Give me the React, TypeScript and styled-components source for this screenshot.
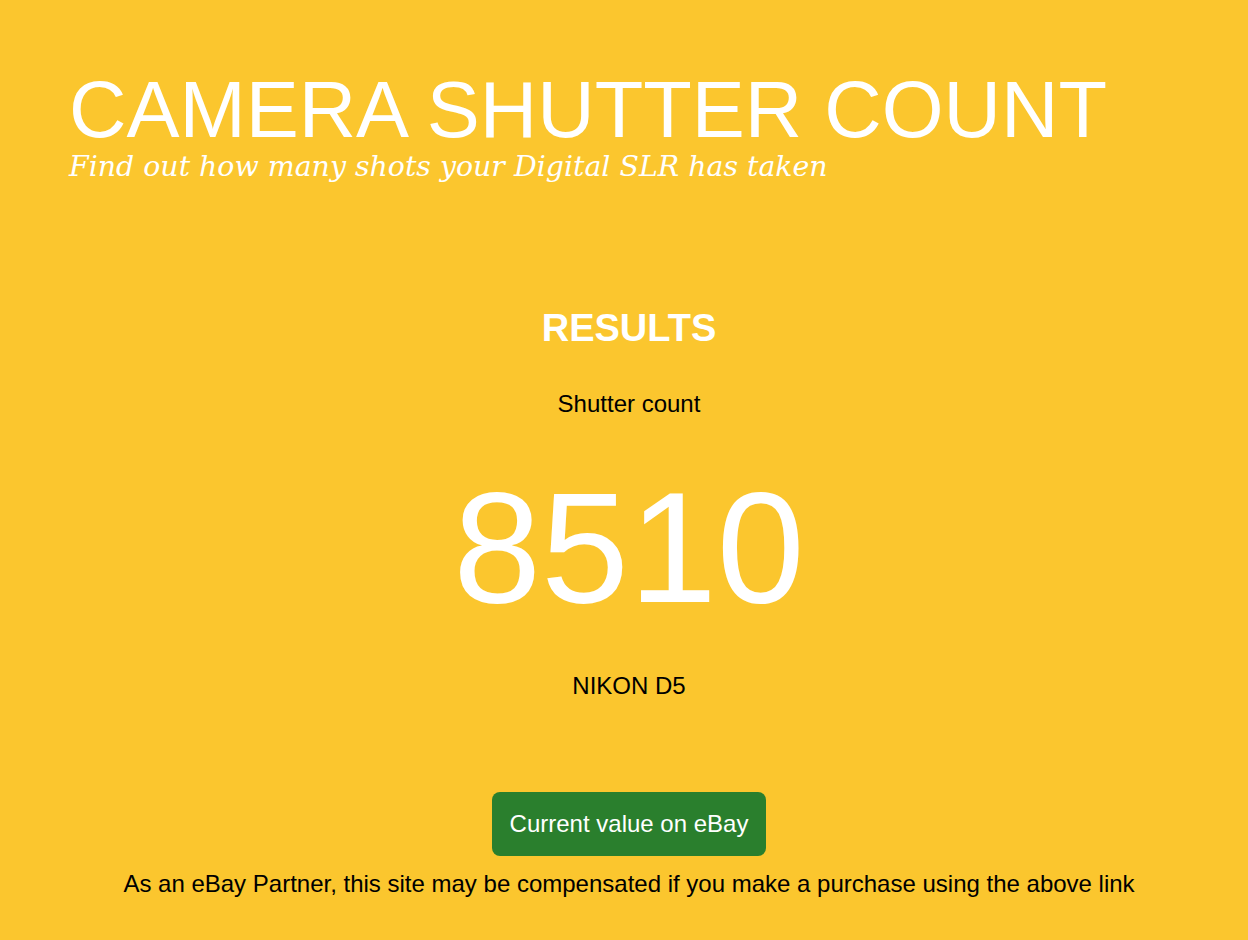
import React from "react";
import styled, { createGlobalStyle } from "styled-components";

const Global = createGlobalStyle`
  html, body { margin: 0; padding: 0; background: #fbc62e; }
  body { font-family: "Liberation Sans", Arial, sans-serif; }
`;

const Page = styled.div`
  min-height: 940px;
  background: #fbc62e;
  box-sizing: border-box;
  padding: 0 0 0 10px;
`;

const Header = styled.header`
  padding: 70px 0 0 59px;
`;

const Title = styled.h1`
  margin: 0;
  font-family: "Liberation Sans", Arial, sans-serif;
  font-weight: 400;
  font-size: 79.5px;
  line-height: 80px;
  color: #fff;
`;

const Subtitle = styled.p`
  margin: 0;
  font-family: "DejaVu Serif", Georgia, serif;
  font-style: italic;
  font-size: 28.4px;
  line-height: 34px;
  color: #fff;
`;

const Results = styled.main`
  display: flex;
  flex-direction: column;
  align-items: center;
  padding-top: 122px;
`;

const Heading = styled.h2`
  margin: 0;
  font-weight: 700;
  font-size: 38px;
  line-height: 44px;
  color: #fff;
`;

const Label = styled.div`
  margin-top: 40px;
  font-size: 24px;
  line-height: 28px;
  color: #000;
`;

const Count = styled.div`
  margin-top: 39px;
  font-size: 158px;
  line-height: 180px;
  color: #fff;
`;

const Model = styled.div`
  margin-top: 35px;
  font-size: 24px;
  line-height: 28px;
  color: #000;
`;

const Button = styled.a`
  margin-top: 92px;
  display: flex;
  align-items: center;
  justify-content: center;
  width: 274px;
  height: 64px;
  background: #2a7f2d;
  border-radius: 8px;
  color: #fff;
  font-size: 24px;
  text-decoration: none;
`;

const Note = styled.p`
  margin: 12px 0 0;
  font-size: 24px;
  line-height: 32px;
  color: #000;
`;

export default function App() {
  return (
    <Page>
      <Global />
      <Header>
        <Title>CAMERA SHUTTER COUNT</Title>
        <Subtitle>Find out how many shots your Digital SLR has taken</Subtitle>
      </Header>
      <Results>
        <Heading>RESULTS</Heading>
        <Label>Shutter count</Label>
        <Count>8510</Count>
        <Model>NIKON D5</Model>
        <Button href="#">Current value on eBay</Button>
        <Note>As an eBay Partner, this site may be compensated if you make a purchase using the above link</Note>
      </Results>
    </Page>
  );
}
